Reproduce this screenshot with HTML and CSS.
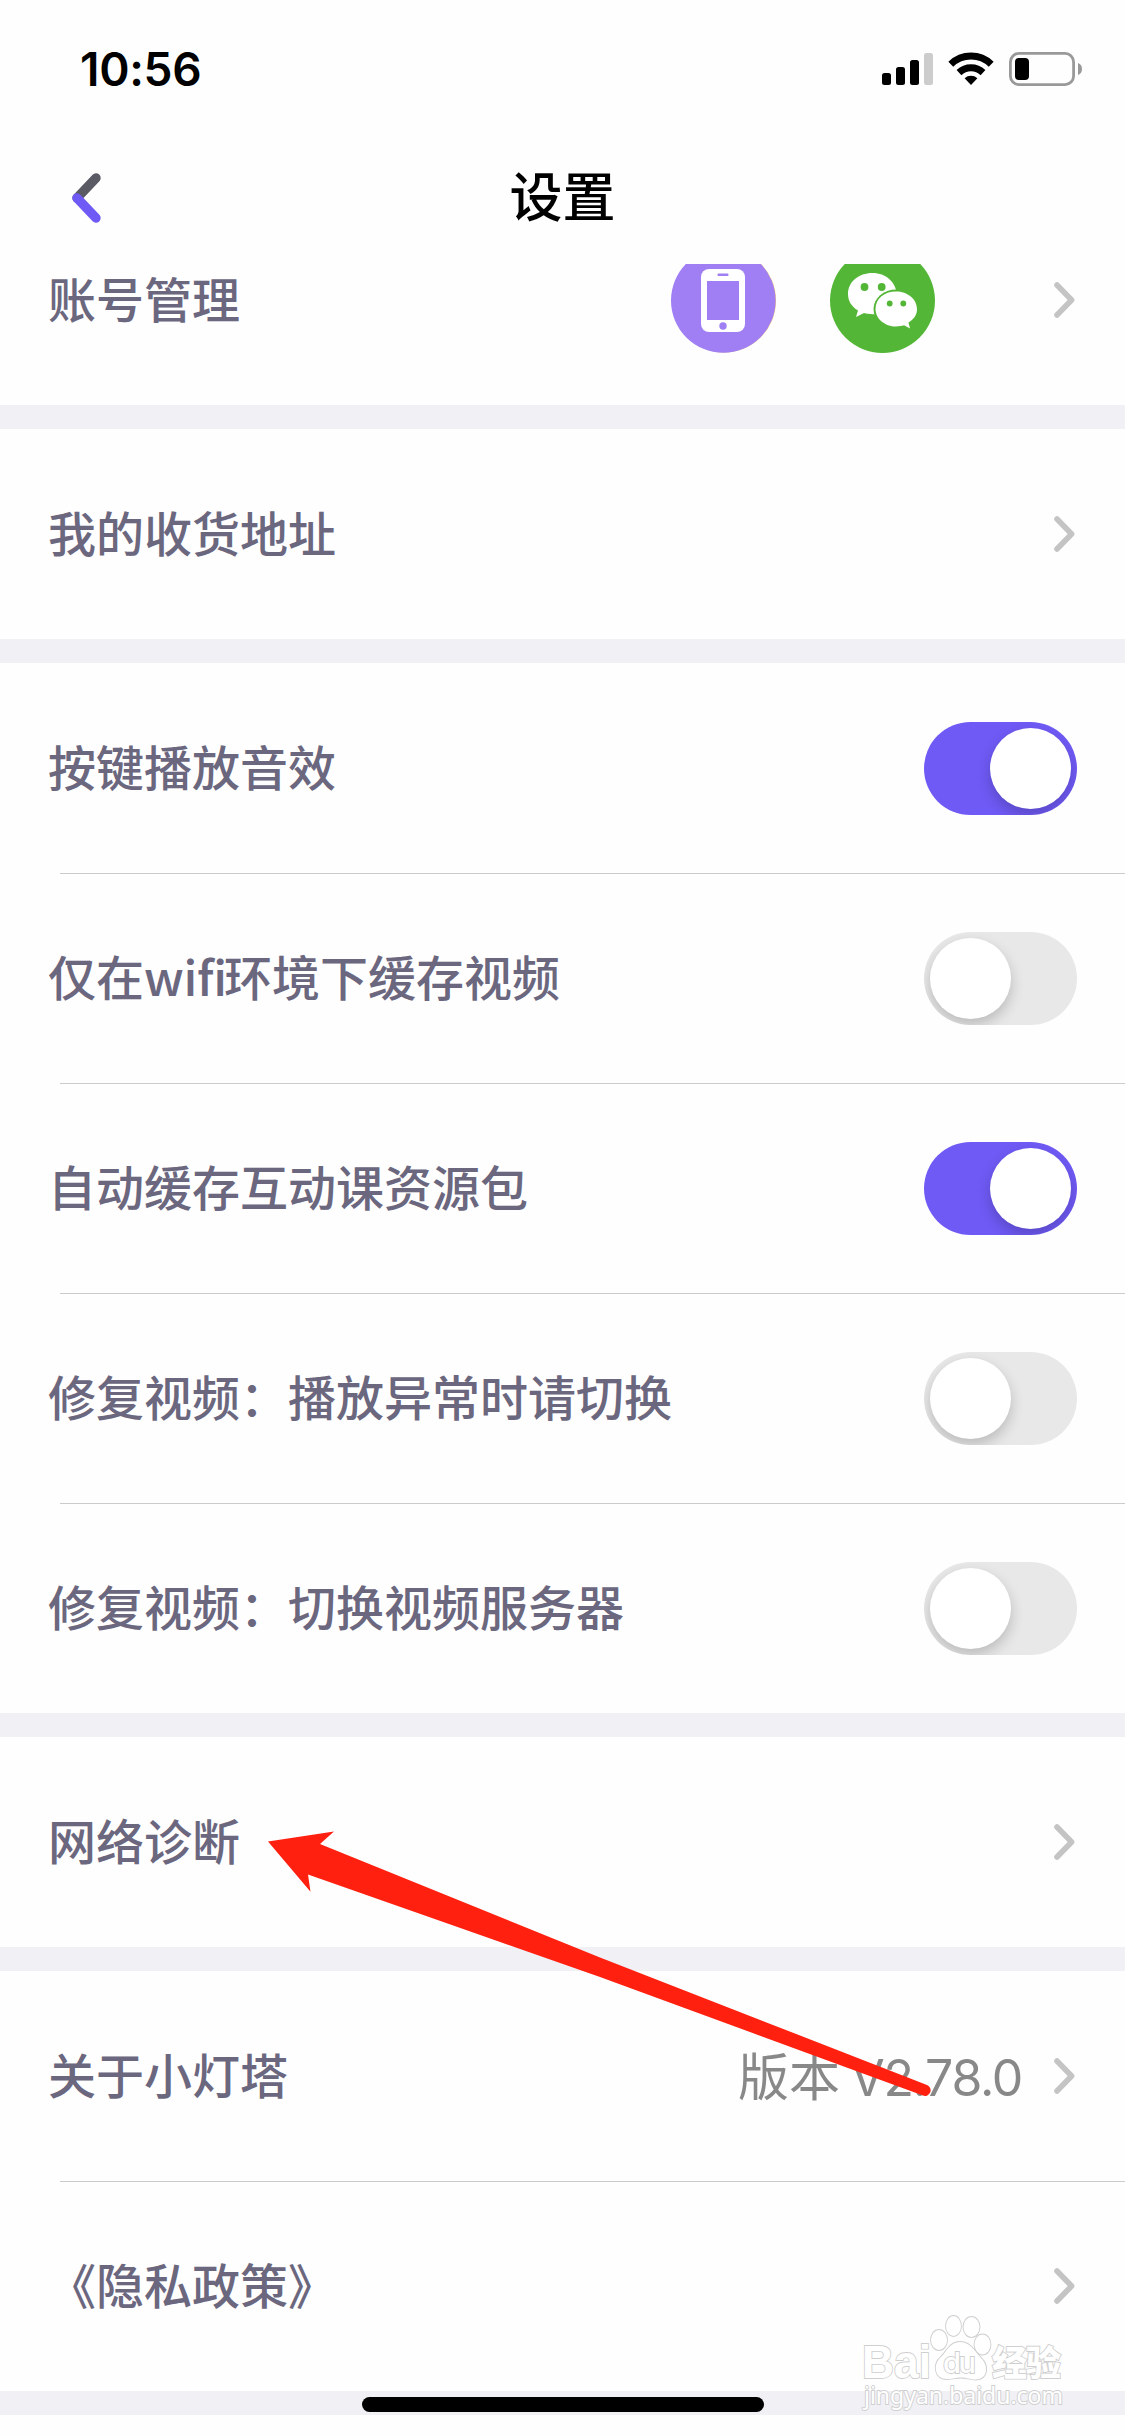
FILE: index.html
```
<!DOCTYPE html>
<html lang="zh-CN">
<head>
<meta charset="utf-8">
<title>设置</title>
<link rel="stylesheet" href="styles.css">
</head>
<body>
<svg class="defs" aria-hidden="true">
  <symbol id="chevron" viewBox="0 0 21 36"><path d="M3 3 L17.6 18 L3 33" fill="none" stroke="#c4c4c4" stroke-width="5.6" stroke-linecap="round" stroke-linejoin="round"/></symbol>
</svg>
<div class="screen">
  <header class="header">
    <div class="status">
      <span class="time">10:56</span>
      <svg class="status-icons" viewBox="0 0 201 36">
        <rect x="0" y="22" width="9" height="12" rx="2.5"/>
        <rect x="14" y="16" width="9" height="18" rx="2.5"/>
        <rect x="28" y="9" width="9" height="25" rx="2.5"/>
        <rect x="42" y="2" width="9" height="32" rx="2.5" fill="#ccc"/>
        <g fill="none" stroke="#000" stroke-width="7">
          <path d="M68.8 13.2 A29 29 0 0 1 109.2 13.2"/>
          <path d="M77 21.6 A17.5 17.5 0 0 1 101 21.6"/>
        </g>
        <path d="M82.6 27.2 A9.5 9.5 0 0 1 95.4 27.2 L89 34 Z"/>
        <rect x="128.4" y="2.4" width="63.2" height="31.2" rx="8.5" fill="none" stroke="#999" stroke-width="2.8"/>
        <rect x="133" y="7" width="14" height="22" rx="4"/>
        <path d="M196 12 Q200 13.5 200 18 Q200 22.500 196 24 Z" fill="#999"/>
      </svg>
    </div>
    <div class="nav">
      <svg class="back" viewBox="0 0 29 50" fill="none" stroke-width="9.4" stroke-linecap="round">
        <path d="M24 5 L5 25" stroke="#595a63"/>
        <path d="M5 25 L24 45" stroke="#6f5af5"/>
      </svg>
      <h1 class="title">设置</h1>
    </div>
  </header>
  <main>
    <section class="group clipped">
      <div class="row">
        <span class="label">账号管理</span>
        <svg class="badge phone" viewBox="0 0 105 105">
          <circle cx="53" cy="52.500" r="52" fill="#f7c873"/>
          <circle cx="52.300" cy="52.500" r="52.300" fill="#9f7ff3"/>
          <rect x="30" y="21" width="44" height="63" rx="8" fill="#fff"/>
          <rect x="36" y="33" width="32" height="39" fill="#9f7ff3"/>
          <rect x="46.500" y="25.500" width="11" height="2.500" rx="1" fill="#9f7ff3"/>
          <circle cx="52" cy="78" r="3.700" fill="#9f7ff3"/>
        </svg>
        <svg class="badge wechat" viewBox="0 0 105 105">
          <circle cx="52.500" cy="52.500" r="52.500" fill="#54b636"/>
          <path d="M42.500 25 C28.500 25 18 34 18 46 C18 53 21.500 58.500 28 62.500 L26 69 L34 65 C37 66 42 66.500 46 66 L67 47 C66 34 56 25 42.500 25 Z" fill="#fff"/>
          <ellipse cx="66" cy="61" rx="22.500" ry="19.500" fill="#54b636"/>
          <path d="M66 43.500 C54 43.500 45.500 51 45.500 61 C45.500 71 55 78.500 66 78.500 C69 78.500 72 78 74 77.300 L80 80.500 L78.500 74.500 C84 71 87 67 87 61 C87 51 77.500 43.500 66 43.500 Z" fill="#fff"/>
          <g fill="#54b636"><circle cx="34.500" cy="39" r="3.900"/><circle cx="51.700" cy="39" r="3.900"/><circle cx="59.700" cy="55.500" r="2.900"/><circle cx="73.300" cy="55.500" r="2.900"/></g>
        </svg>
        <svg class="chevron"><use href="#chevron"/></svg>
      </div>
    </section>
    <section class="group">
      <div class="row"><span class="label">我的收货地址</span><svg class="chevron"><use href="#chevron"/></svg></div>
    </section>
    <section class="group">
      <div class="row"><span class="label">按键播放音效</span><span class="toggle on"><i class="knob"></i></span></div>
      <div class="row"><span class="label">仅在<span class="latin">wifi</span>环境下缓存视频</span><span class="toggle"><i class="knob"></i></span></div>
      <div class="row"><span class="label">自动缓存互动课资源包</span><span class="toggle on"><i class="knob"></i></span></div>
      <div class="row"><span class="label">修复视频：播放异常时请切换</span><span class="toggle"><i class="knob"></i></span></div>
      <div class="row"><span class="label">修复视频：切换视频服务器</span><span class="toggle"><i class="knob"></i></span></div>
    </section>
    <section class="group">
      <div class="row"><span class="label">网络诊断</span><svg class="chevron"><use href="#chevron"/></svg></div>
    </section>
    <section class="group">
      <div class="row"><span class="label">关于小灯塔</span><span class="version">版本 <span class="num">V2.78.0</span></span><svg class="chevron"><use href="#chevron"/></svg></div>
      <div class="row"><span class="label">《隐私政策》</span><svg class="chevron"><use href="#chevron"/></svg></div>
    </section>
  </main>
  <svg class="pointer" viewBox="0 0 664 266">
    <path d="M0 11.600 L66 1.600 L52 14 L332 127.500 L659 255 A5.500 5.500 0 0 1 655 265.500 L332 147 L203 101.700 L40 44.500 L42.500 61.800 Z" fill="#ff2010"/>
  </svg>
  <svg class="watermark" viewBox="0 0 230 120">
    <g class="mark">
      <text class="brand" x="12" y="78" textLength="69" lengthAdjust="spacingAndGlyphs">Bai</text>
      <ellipse cx="89" cy="40" rx="8" ry="10"/><ellipse cx="103.500" cy="26" rx="7.500" ry="10"/>
      <ellipse cx="121.500" cy="27" rx="8" ry="10"/><ellipse cx="132.500" cy="44.500" rx="8" ry="10"/>
      <path d="M110 42 C100 42 97 51 91 57 C82 65 85 79 97 79 C104 79 105 77.500 111 77.500 C117 77.500 119 79.500 126 79.500 C138 79 139 66 131 58 C125 52 121 42 110 42 Z"/>
      <text class="du" x="93" y="73" textLength="33">du</text>
      <text class="cn" x="142" y="76" textLength="69">经验</text>
      <text class="url" x="14" y="104" textLength="199">jingyan.baidu.com</text>
    </g>
  </svg>
  <div class="home-indicator"></div>
</div>
</body>
</html>
```
FILE: styles.css
```
* { box-sizing: border-box; }
body { margin: 0; background: #fefefe; }
.defs { display: none; }
.screen {
  position: relative;
  width: 1125px;
  height: 2436px;
  overflow: hidden;
  background: #fefefe;
  font-family: "Noto Sans CJK SC", sans-serif;
}
.header { height: 264px; }
.status {
  display: flex;
  justify-content: space-between;
  align-items: center;
  height: 138px;
  padding: 0 42px 0 80px;
}
.time {
  font: 600 46px/56px Inter, sans-serif;
  letter-spacing: -0.3px;
  color: #000;
}
.status-icons { width: 201px; height: 36px; }
.nav {
  display: grid;
  grid-template-columns: 101px 1fr 101px;
  align-items: center;
  height: 120px;
}
.back { width: 29px; height: 50px; justify-self: end; }
.title {
  margin: 0;
  padding-bottom: 8px;
  text-align: center;
  font-size: 53px;
  font-weight: 500;
  line-height: 80px;
  color: #000;
}
.group { border-bottom: 24px solid #f0f0f5; }
.clipped { height: 165px; overflow: hidden; }
.clipped .row { margin-top: -69px; }
.row {
  display: flex;
  align-items: center;
  height: 210px;
  padding: 1px 48px 0;
}
.row + .row {
  background: linear-gradient(#cbcbcb, #cbcbcb) 60px 0 / 100% 1px no-repeat;
}
.label {
  margin-right: auto;
  padding-bottom: 8px;
  font-size: 48px;
  font-weight: 500;
  line-height: 70px;
  white-space: nowrap;
  color: #6b677e;
}
.latin { display: inline-block; width: 80px; letter-spacing: -0.3px; }
.badge { width: 105px; height: 105px; }
.phone { margin-right: 54px; }
.wechat { margin-right: 119px; }
.chevron { width: 21px; height: 36px; margin: 0 2px 1px 0; }
.toggle {
  display: flex;
  width: 153px;
  height: 93px;
  padding: 6px;
  border-radius: 47px;
  background: #e8e8e8;
  overflow: hidden;
}
.on { justify-content: flex-end; background: #6f5af5; }
.knob {
  width: 81px;
  height: 81px;
  border-radius: 50%;
  background: #fff;
  box-shadow: 0 6px 14px rgba(0, 0, 0, 0.2);
}
.version {
  margin-right: 32px;
  padding-bottom: 2px;
  font-size: 51px;
  line-height: 74px;
  white-space: nowrap;
  word-spacing: -1px;
  color: #888;
}
.num { font-family: Inter, sans-serif; font-size: 50px; letter-spacing: -1.3px; }
.pointer { position: absolute; left: 268px; top: 1830px; width: 664px; height: 266px; }
.watermark { position: absolute; left: 850px; top: 2300px; width: 230px; height: 120px; }
.mark { fill: #fff; stroke: #cfcfcf; stroke-width: 1.8px; paint-order: stroke; }
.brand { font: 700 46px "Liberation Sans", sans-serif; }
.du { font: 500 29px Inter, sans-serif; }
.cn { font: 900 35px "Noto Sans CJK SC", sans-serif; }
.url { font: 400 23px "Noto Sans", sans-serif; }
.home-indicator {
  position: absolute;
  left: 362px;
  top: 2397px;
  width: 402px;
  height: 15px;
  border-radius: 8px;
  background: #000;
}
```
